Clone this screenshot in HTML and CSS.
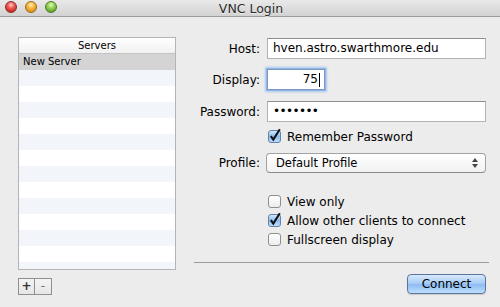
FILE: index.html
```html
<!DOCTYPE html>
<html>
<head>
<meta charset="utf-8">
<link rel="stylesheet" href="styles.css">
</head>
<body>
<div class="window">
  <div class="titlebar">
    <div class="lights">
      <span class="light red"></span>
      <span class="light amber"></span>
      <span class="light green"></span>
    </div>
    <div class="title">VNC Login</div>
  </div>
  <div class="content">
    <div class="servers">
      <div class="table">
        <div class="thead">Servers</div>
        <div class="tbody">
          <div class="row sel">New Server</div>
          <div class="row"></div><div class="row"></div><div class="row"></div>
          <div class="row"></div><div class="row"></div><div class="row"></div>
          <div class="row"></div><div class="row"></div><div class="row"></div>
          <div class="row"></div><div class="row"></div><div class="row"></div>
          <div class="row"></div>
        </div>
      </div>
      <div class="pm">
        <span class="pmbtn plus">+</span><span class="pmbtn minus">-</span>
      </div>
    </div>
    <div class="form">
      <div class="frow host">
        <span class="lbl">Host:</span>
        <div class="field">hven.astro.swarthmore.edu</div>
      </div>
      <div class="frow display">
        <span class="lbl">Display:</span>
        <div class="field short focus"><span>75</span><span class="caret"></span></div>
      </div>
      <div class="frow password">
        <span class="lbl">Password:</span>
        <div class="field dots">•••••••</div>
      </div>
      <div class="crow remember">
        <svg class="cb" width="14" height="15" viewBox="0 0 14 15"><defs><linearGradient id="cbg1" x1="0" y1="0" x2="0" y2="1"><stop offset="0" stop-color="#d8eafc"/><stop offset="0.5" stop-color="#8cbcec"/><stop offset="1" stop-color="#c2e0fb"/></linearGradient></defs><rect x="0.5" y="2.5" width="12" height="12" rx="2.5" fill="url(#cbg1)" stroke="#6282ab"/><path d="M2.8 8.2 L5.3 11.6 L11.8 1.2" fill="none" stroke="#111" stroke-width="2"/></svg>
        <span class="ctext">Remember Password</span>
      </div>
      <div class="frow profile">
        <span class="lbl">Profile:</span>
        <div class="popup">
          <span>Default Profile</span>
          <svg class="arrows" width="6" height="10" viewBox="0 0 6 10"><path d="M3 0 L6 4 L0 4 Z M0 6 L6 6 L3 10 Z" fill="#444"/></svg>
        </div>
      </div>
      <div class="checks">
        <div class="crow">
          <svg class="cb" width="14" height="15" viewBox="0 0 14 15"><defs><linearGradient id="cbu1" x1="0" y1="0" x2="0" y2="1"><stop offset="0" stop-color="#ffffff"/><stop offset="1" stop-color="#ececec"/></linearGradient></defs><rect x="0.5" y="2.5" width="12" height="12" rx="2.5" fill="url(#cbu1)" stroke="#8e8e8e"/></svg>
          <span class="ctext">View only</span>
        </div>
        <div class="crow">
          <svg class="cb" width="14" height="15" viewBox="0 0 14 15"><defs><linearGradient id="cbg2" x1="0" y1="0" x2="0" y2="1"><stop offset="0" stop-color="#d8eafc"/><stop offset="0.5" stop-color="#8cbcec"/><stop offset="1" stop-color="#c2e0fb"/></linearGradient></defs><rect x="0.5" y="2.5" width="12" height="12" rx="2.5" fill="url(#cbg2)" stroke="#6282ab"/><path d="M2.8 8.2 L5.3 11.6 L11.8 1.2" fill="none" stroke="#111" stroke-width="2"/></svg>
          <span class="ctext">Allow other clients to connect</span>
        </div>
        <div class="crow">
          <svg class="cb" width="14" height="15" viewBox="0 0 14 15"><defs><linearGradient id="cbu2" x1="0" y1="0" x2="0" y2="1"><stop offset="0" stop-color="#ffffff"/><stop offset="1" stop-color="#ececec"/></linearGradient></defs><rect x="0.5" y="2.5" width="12" height="12" rx="2.5" fill="url(#cbu2)" stroke="#8e8e8e"/></svg>
          <span class="ctext">Fullscreen display</span>
        </div>
      </div>
      <div class="sep"></div>
      <div class="actions">
        <div class="connect">Connect</div>
      </div>
    </div>
  </div>
</div>
</body>
</html>
```

FILE: styles.css
```css
html, body {
  margin: 0;
  padding: 0;
}
body {
  width: 500px;
  height: 307px;
  overflow: hidden;
  background: #ececec;
  font-family: "DejaVu Sans", "Liberation Sans", sans-serif;
  font-size: 12px;
  color: #000;
}
.window {
  width: 500px;
  height: 307px;
  display: flex;
  flex-direction: column;
}
.titlebar {
  position: relative;
  height: 16px;
  border-bottom: 1px solid #9c9c9c;
  background: linear-gradient(#e9e9e9, #d2d2d2);
  display: flex;
  align-items: center;
  justify-content: center;
}
.lights {
  position: absolute;
  left: 5px;
  top: 1px;
  display: flex;
  gap: 8px;
}
.light {
  width: 12px;
  height: 12px;
  border-radius: 50%;
  box-sizing: border-box;
}
.light.red {
  background: radial-gradient(circle at 50% 30%, #ffd0c8 0, #f0605a 35%, #c8261f 80%, #a11a15 100%);
  border: 1px solid #8e2b26;
}
.light.amber {
  background: radial-gradient(circle at 50% 30%, #fff0c0 0, #f8be4a 35%, #df8c12 80%, #b76e0b 100%);
  border: 1px solid #9a6a1e;
}
.light.green {
  background: radial-gradient(circle at 50% 30%, #e2fbc0 0, #9bd65c 35%, #5da42a 80%, #427a1c 100%);
  border: 1px solid #4d7a2a;
}
.title {
  font-size: 12.5px;
  color: #2b2b2b;
  text-shadow: 0 1px 0 rgba(255,255,255,0.6);
  margin-left: 2px;
}
.content {
  display: flex;
  padding: 20px 0 0 18px;
}
.servers {
  width: 158px;
  display: flex;
  flex-direction: column;
}
.table {
  height: 233px;
  box-sizing: border-box;
  border: 1px solid #b4b4b4;
  background: #fff;
  overflow: hidden;
}
.thead {
  height: 15px;
  line-height: 15px;
  border-bottom: 1px solid #c4c4c4;
  background: linear-gradient(#ffffff, #f1f1f1);
  text-align: center;
  font-size: 10px;
}
.row {
  height: 16px;
  line-height: 16px;
  font-size: 10px;
  padding-left: 4px;
  background: #fff;
}
.row:nth-child(even) {
  background: #f2f5fa;
}
.row.sel {
  background: #d4d4d4;
}
.pm {
  display: flex;
  margin-top: 8px;
}
.pmbtn {
  width: 17px;
  height: 17px;
  box-sizing: border-box;
  border: 1px solid #8f8f8f;
  background: linear-gradient(#f4f4f4, #e6e6e6);
  text-align: center;
  line-height: 14px;
  font-size: 12px;
}
.pmbtn + .pmbtn {
  border-left: none;
  width: 17px;
}
.plus { color: #333; font-weight: bold; }
.minus { color: #6d6d6d; }
.form {
  margin-left: 18px;
  width: 295px;
  display: flex;
  flex-direction: column;
  padding-top: 1px;
}
.frow {
  display: flex;
  align-items: center;
  height: 21px;
}
.lbl {
  width: 66px;
  margin-right: 7px;
  text-align: right;
}
.field {
  width: 219px;
  height: 21px;
  box-sizing: border-box;
  border: 1px solid #b2b2b2;
  border-top-color: #8e8e8e;
  background: #fff;
  padding-left: 5px;
  line-height: 19px;
  white-space: nowrap;
}
.field.short {
  width: 58px;
  padding: 0 4px 0 0;
  display: flex;
  justify-content: flex-end;
  align-items: center;
}
.field.focus {
  border-color: #7c99c2;
  box-shadow: 0 0 0 1px #8fb4e4, 0 0 2px 2px #a9c8ee;
}
.caret {
  width: 1px;
  height: 14px;
  background: #000;
  margin-left: 1px;
}
.field.dots {
  letter-spacing: -0.6px;
  font-size: 12px;
}
.display { margin-top: 10px; }
.password { margin-top: 11px; }
.crow {
  display: flex;
  align-items: center;
  height: 19px;
  padding-left: 74px;
}
.cb {
  margin-top: -3px;
  flex: none;
}
.ctext {
  margin-left: 5px;
}
.remember {
  height: 14px;
  margin-top: 8px;
}
.profile {
  height: 20px;
  margin-top: 9px;
}
.popup {
  width: 220px;
  height: 20px;
  box-sizing: border-box;
  border: 1px solid #a2a2a2;
  border-bottom-color: #8a8a8a;
  border-radius: 4px;
  background: linear-gradient(#ffffff, #f1f1f1);
  display: flex;
  align-items: center;
  justify-content: space-between;
  padding: 0 7px 0 9px;
  font-size: 11.5px;
  margin-left: -1px;
}
.checks {
  margin-top: 19px;
  display: flex;
  flex-direction: column;
}
.sep {
  margin-top: 13px;
  height: 1px;
  background: #9a9a9a;
}
.actions {
  display: flex;
  justify-content: flex-end;
  margin-top: 11px;
  padding-right: 3px;
}
.connect {
  width: 79px;
  height: 20px;
  box-sizing: border-box;
  border: 1px solid #5b75a0;
  border-radius: 4px;
  background: linear-gradient(#d8e9fc 0%, #a9cdf6 45%, #8dbcf2 55%, #bfe0fc 100%);
  text-align: center;
  line-height: 18px;
  font-size: 12px;
  box-shadow: 0 1px 1px rgba(0,0,0,0.15);
}
```
